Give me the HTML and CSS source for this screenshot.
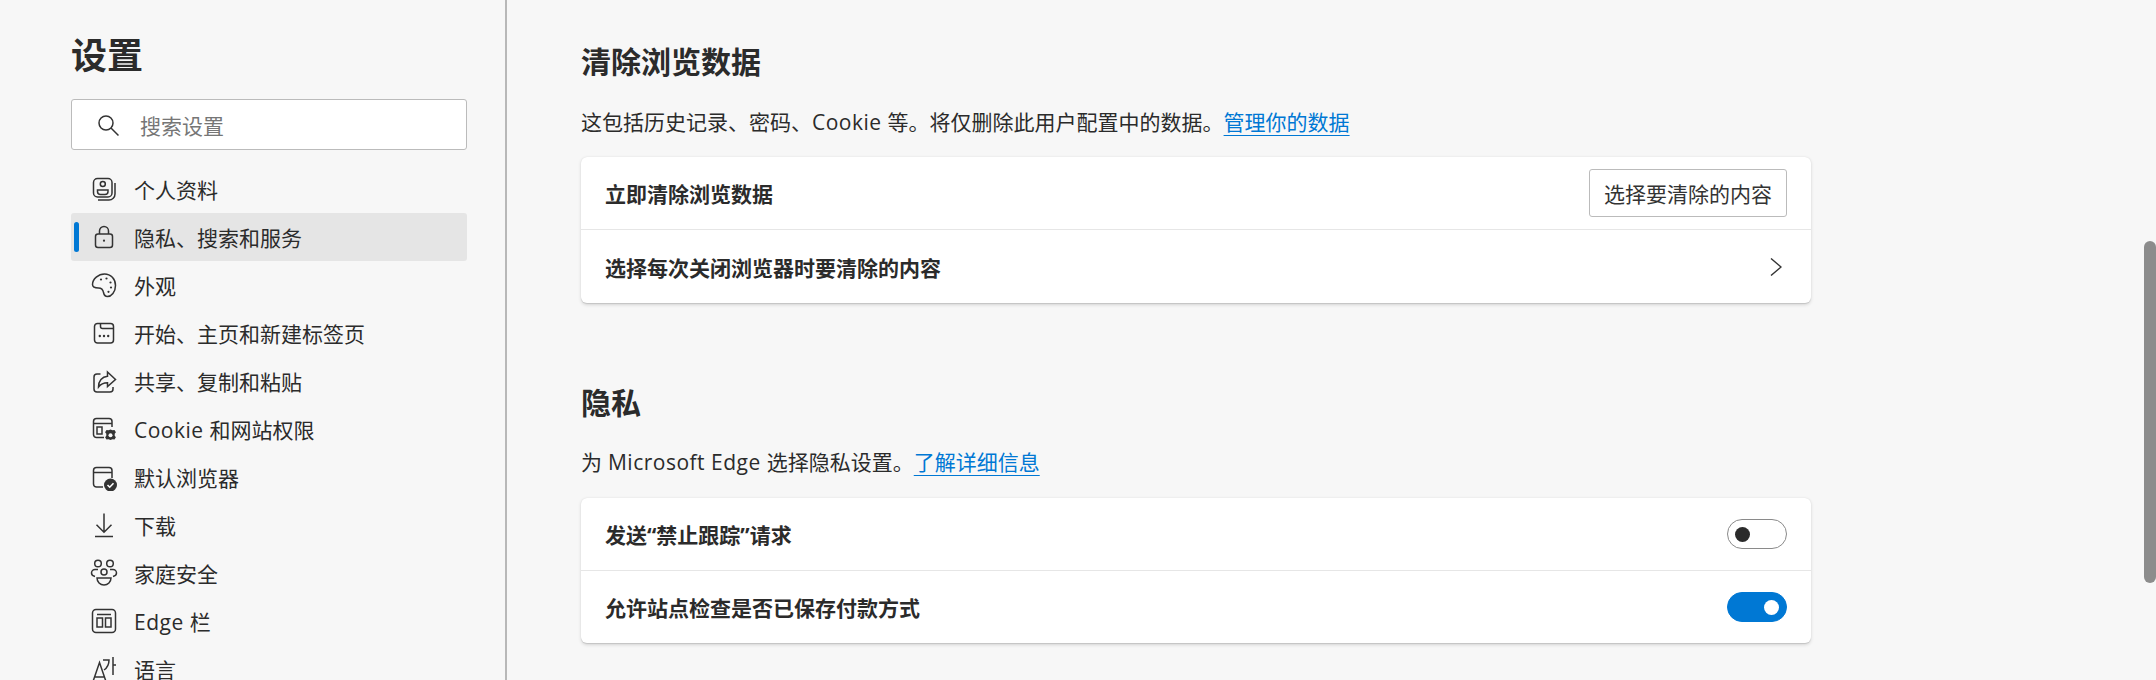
FILE: index.html
```html
<!DOCTYPE html>
<html lang="zh-CN">
<head>
    <meta charset="UTF-8">
    <meta name="viewport" content="width=device-width, initial-scale=1.0">
    <title>设置</title>
    <link rel="stylesheet" href="styles.css">
</head>
<body>
    <!--left navigation-->
    <nav class="sidebar">
        <h1 class="sidebar-title">设置</h1>
        <div class="search-box">
            <svg class="search-icon" viewBox="0 0 24 24"><circle cx="10" cy="10" r="7"/><path d="M15 15l7.500 7.500"/></svg>
            <span class="search-text">搜索设置</span>
        </div>
        <ul class="nav-list">
            <li class="nav-item">
                <svg class="nav-icon" viewBox="0 0 28 28"><rect x="3.500" y="3.500" width="18.500" height="18.500" rx="4"/><path d="M25 8v11a6 6 0 0 1-6 6H8"/><circle cx="12.800" cy="9" r="2.500"/><path d="M7.500 15h10.500v1.500a3 3 0 0 1-3 3h-4.500a3 3 0 0 1-3-3z"/></svg>
                <span>个人资料</span>
            </li>
            <li class="nav-item nav-item-active">
                <svg class="nav-icon" viewBox="0 0 28 28"><rect x="5.500" y="11" width="17" height="13.500" rx="2.500"/><path d="M9.500 11V8a4.500 4.500 0 0 1 9 0v3"/><circle class="icon-fill" cx="14" cy="17.700" r="1.100"/></svg>
                <span>隐私、搜索和服务</span>
            </li>
            <li class="nav-item">
                <svg class="nav-icon" viewBox="0 0 28 28"><path d="M14.500 3C20.800 3 25.500 8 25.500 14.500 25.500 21 21.300 25.500 17.500 25.500 15 25.500 14 24 13.500 21.500 13 18.500 11.500 17 8.500 17 5.500 17 2.500 16.500 2.500 13.500 2.500 8 8.500 3 14.500 3z"/><circle class="icon-fill" cx="11" cy="8.500" r="1.100"/><circle class="icon-fill" cx="16.500" cy="7.500" r="1.100"/><circle class="icon-fill" cx="20.500" cy="11.500" r="1.100"/><circle class="icon-fill" cx="21" cy="16.500" r="1.100"/><circle class="icon-fill" cx="18.500" cy="20.800" r="1.100"/></svg>
                <span>外观</span>
            </li>
            <li class="nav-item">
                <svg class="nav-icon" viewBox="0 0 28 28"><rect x="4.500" y="4.500" width="19" height="19.500" rx="3"/><path d="M10.500 4.500v3a2 2 0 0 0 2 2h11"/><circle class="icon-fill" cx="9.800" cy="17" r="1.200"/><circle class="icon-fill" cx="14" cy="17" r="1.200"/><circle class="icon-fill" cx="18.200" cy="17" r="1.200"/></svg>
                <span>开始、主页和新建标签页</span>
            </li>
            <li class="nav-item">
                <svg class="nav-icon" viewBox="0 0 28 28"><path d="M10.500 7H7a3 3 0 0 0-3 3v12a3 3 0 0 0 3 3h13a3 3 0 0 0 3-3v-2"/><path d="M17.500 5l8 7.500-8 7v-3.800c-4 0-6.800 1.300-9 4.300 0-6 3.500-10.300 9-10.800z"/></svg>
                <span>共享、复制和粘贴</span>
            </li>
            <li class="nav-item">
                <svg class="nav-icon" viewBox="0 0 28 28"><path d="M14 22.500H6.500a3 3 0 0 1-3-3v-13a3 3 0 0 1 3-3H19a3 3 0 0 1 3 3V12"/><path d="M3.500 8.500H22"/><rect x="7" y="12" width="5" height="7"/><path class="icon-fill" d="M20.500 14.500l2 .8 2-.4 1.400 2.300-1.200 1.600v1.900l1.200 1.600-1.400 2.300-2-.4-2 .8-2-.8-2 .4-1.400-2.300 1.200-1.600v-1.900l-1.200-1.600 1.400-2.300 2 .4z"/><circle class="icon-hole" cx="20.500" cy="20.300" r="2"/></svg>
                <span><span class="latin">Cookie </span>和网站权限</span>
            </li>
            <li class="nav-item">
                <svg class="nav-icon" viewBox="0 0 28 28"><path d="M13 24H6.500a3 3 0 0 1-3-3V7.500a3 3 0 0 1 3-3H19a3 3 0 0 1 3 3V15"/><path d="M3.500 9.500H22"/><circle class="icon-fill" cx="20.500" cy="22" r="6.500"/><path class="icon-check" d="M17.500 22l2.200 2.200 3.800-4"/></svg>
                <span>默认浏览器</span>
            </li>
            <li class="nav-item">
                <svg class="nav-icon" viewBox="0 0 28 28"><path d="M14 2.500V21M6.500 13.700l7.500 7.500 7.500-7.500M5 25.500h18"/></svg>
                <span>下载</span>
            </li>
            <li class="nav-item">
                <svg class="nav-icon" viewBox="0 0 28 28"><circle cx="8" cy="4.500" r="3.300"/><circle cx="20" cy="4.500" r="3.300"/><circle cx="14" cy="13" r="3"/><path d="M7 19h14a7 7 0 0 1-14 0z"/><path d="M8 10.500H5a3.500 3.500 0 0 0-3.500 3.500c0 2 1.500 3 3.500 3.500M20 10.500h3a3.500 3.500 0 0 1 3.500 3.500c0 2-1.500 3-3.500 3.500"/></svg>
                <span>家庭安全</span>
            </li>
            <li class="nav-item">
                <svg class="nav-icon" viewBox="0 0 28 28"><rect x="2.500" y="2.500" width="23" height="23" rx="3.500"/><path d="M7 7.500h14"/><rect x="7" y="11" width="5.500" height="9"/><rect x="15.500" y="11" width="5.500" height="9"/></svg>
                <span><span class="latin">Edge </span>栏</span>
            </li>
            <li class="nav-item">
                <svg class="nav-icon" viewBox="0 0 28 28"><path d="M2.500 28L9.500 7.500 16.500 28M5 22h9"/><path d="M13 5h6c0 4-2 8-5 10M23 2v18M23 10h3"/></svg>
                <span>语言</span>
            </li>
        </ul>
    </nav>

    <!--settings content-->
    <main class="content">
        <section class="section section-data">
            <h2 class="section-title">清除浏览数据</h2>
            <p class="section-desc">这包括历史记录、密码、<span class="latin">Cookie </span>等。将仅删除此用户配置中的数据。<a href="#" class="link">管理你的数据</a></p>
            <div class="card">
                <div class="row">
                    <span class="row-label">立即清除浏览数据</span>
                    <button class="row-button">选择要清除的内容</button>
                </div>
                <div class="row row-tall">
                    <span class="row-label">选择每次关闭浏览器时要清除的内容</span>
                    <svg class="chevron" viewBox="0 0 12 18"><path d="M1 .5L11 9 1 17.500"/></svg>
                </div>
            </div>
        </section>

        <section class="section section-privacy">
            <h2 class="section-title">隐私</h2>
            <p class="section-desc">为<span class="latin"> Microsoft Edge </span>选择隐私设置。<a href="#" class="link">了解详细信息</a></p>
            <div class="card">
                <div class="row">
                    <span class="row-label">发送“禁止跟踪”请求</span>
                    <div class="toggle"><span class="toggle-knob"></span></div>
                </div>
                <div class="row">
                    <span class="row-label">允许站点检查是否已保存付款方式</span>
                    <div class="toggle toggle-on"><span class="toggle-knob"></span></div>
                </div>
            </div>
        </section>
    </main>

    <div class="scroll-thumb"></div>
</body>
</html>
```

FILE: styles.css
```css
/*page*/
html, body {
    height: 100%;
}

body {
    margin: 0;
    display: flex;
    height: 680px;
    overflow: hidden;
    background-color: #f7f7f7;
    color: #2b2b2b;
    font-family: "Open Sans", "Noto Sans CJK SC", sans-serif;
    font-size: 21px;
}

.latin {
    letter-spacing: 0.5px;
}

/*sidebar*/
.sidebar {
    width: 436px;
    flex-shrink: 0;
    box-sizing: content-box;
    padding-left: 71px;
    border-right: 0;
    position: relative;
    display: flex;
    flex-direction: column;
}

.sidebar::after {
    content: "";
    position: absolute;
    top: 0;
    bottom: 0;
    right: 0;
    width: 2px;
    background-color: #b8b8b8;
}

.sidebar-title {
    margin: 32px 0 0;
    font-size: 36px;
    line-height: 48px;
    font-weight: 700;
    flex-shrink: 0;
}

.search-box {
    width: 396px;
    height: 51px;
    margin-top: 19px;
    box-sizing: border-box;
    flex-shrink: 0;
    display: flex;
    align-items: center;
    padding-left: 24px;
    background-color: #fff;
    border: 1px solid #bbb;
    border-radius: 3px;
}

.search-icon {
    width: 24px;
    height: 24px;
    fill: none;
    stroke: #333;
    stroke-width: 1.500;
}

.search-text {
    margin-left: 20px;
    color: #767676;
}

.nav-list {
    list-style: none;
    margin: 15px 0 0;
    padding: 0;
    width: 396px;
    flex-shrink: 0;
}

.nav-item {
    position: relative;
    height: 48px;
    display: flex;
    align-items: center;
    gap: 16px;
    padding-left: 19px;
    border-radius: 3px;
}

.nav-item-active {
    background-color: #e5e5e5;
}

.nav-item-active::before {
    content: "";
    position: absolute;
    left: 3px;
    top: 9px;
    width: 5px;
    height: 30px;
    border-radius: 3px;
    background-color: #0078d4;
}

.nav-icon {
    width: 28px;
    height: 28px;
    flex-shrink: 0;
    fill: none;
    stroke: #333;
    stroke-width: 1.500;
}

.nav-icon .icon-fill {
    fill: #333;
    stroke: none;
}

.nav-icon .icon-hole {
    fill: #f7f7f7;
    stroke: none;
}

.nav-icon .icon-check {
    stroke: #fff;
    stroke-width: 1.600;
}

/*main column*/
.content {
    width: 1230px;
    margin-left: 74px;
    flex-shrink: 0;
}

.section-data {
    padding-top: 42px;
}

.section-privacy {
    padding-top: 80px;
}

.section-title {
    margin: 0;
    font-size: 30px;
    line-height: 40px;
    font-weight: 700;
}

.section-desc {
    margin: 25px 0 20px;
    line-height: 30px;
}

.section-privacy .section-desc {
    margin-top: 24px;
    margin-bottom: 21px;
}

.link {
    color: #0078d4;
    text-decoration: underline;
    text-decoration-thickness: 1px;
    text-underline-offset: 5px;
}

/*cards*/
.card {
    background-color: #fff;
    border-radius: 6px;
    box-shadow: 0 1.600px 3.600px rgba(0, 0, 0, 0.132), 0 0.300px 0.900px rgba(0, 0, 0, 0.108);
}

.row {
    height: 72px;
    display: flex;
    align-items: center;
    justify-content: space-between;
    padding: 0 24px;
}

.row + .row {
    border-top: 1px solid #e6e6e6;
}

.row-tall {
    height: 73px;
}

.row-label {
    font-weight: 700;
}

.row-button {
    width: 198px;
    height: 48px;
    padding: 0;
    background-color: #fff;
    border: 1px solid #bbb;
    border-radius: 3px;
    color: #333;
    font-family: inherit;
    font-size: 21px;
}

.chevron {
    width: 12px;
    height: 18px;
    margin-right: 5px;
    fill: none;
    stroke: #333;
    stroke-width: 1.400;
}

/*toggles*/
.toggle {
    width: 60px;
    height: 30px;
    box-sizing: border-box;
    display: flex;
    align-items: center;
    padding: 0 7px;
    border: 1px solid #8a8a8a;
    border-radius: 15px;
    background-color: #fff;
}

.toggle-knob {
    width: 15px;
    height: 15px;
    border-radius: 50%;
    background-color: #2b2b2b;
}

.toggle-on {
    justify-content: flex-end;
    border-color: #0078d4;
    background-color: #0078d4;
}

.toggle-on .toggle-knob {
    background-color: #fff;
}

/*overlay scrollbar*/
.scroll-thumb {
    position: absolute;
    top: 241px;
    right: 0;
    width: 12px;
    height: 342px;
    border-radius: 6px;
    background-color: #8c8c8c;
}
```
